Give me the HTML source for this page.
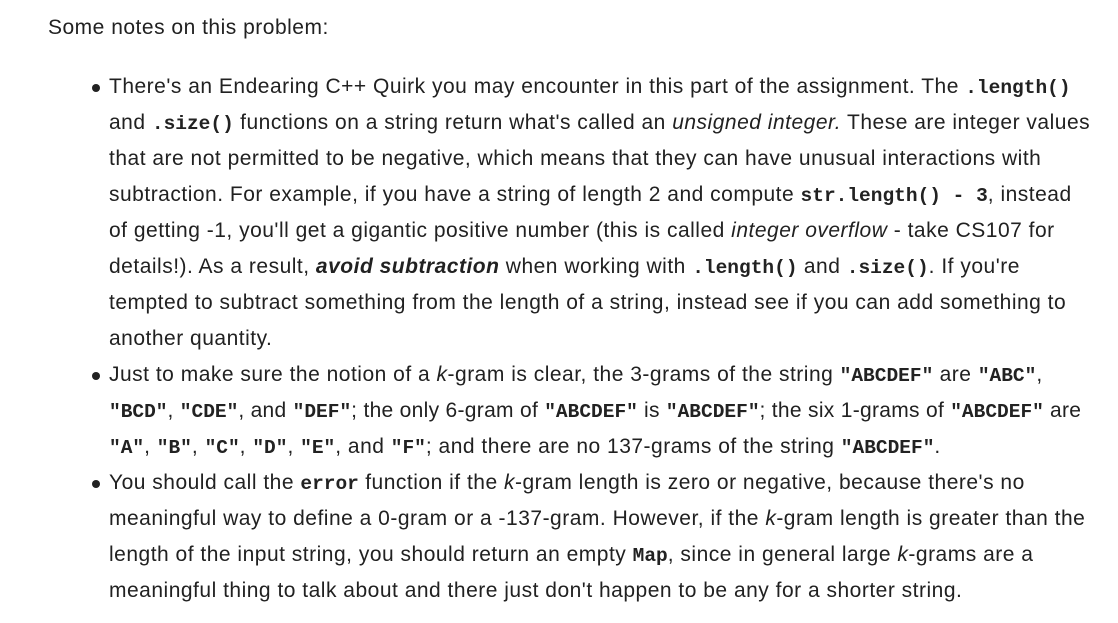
<!DOCTYPE html>
<html><head><meta charset="utf-8"><style>
body{margin:0;background:#fff;width:1118px;height:623px;overflow:hidden;font-family:"Liberation Sans",sans-serif;font-size:21px;letter-spacing:0.5px;color:#212121}
.l{position:absolute;left:109px;white-space:nowrap;height:36px;line-height:36px}
.p{left:48px}
code{font-family:"Liberation Mono",monospace;font-weight:bold;font-size:19.5px;letter-spacing:0px;color:#222}
.b::before{content:"";position:absolute;left:-17px;top:15px;width:8px;height:8px;border-radius:50%;background:#222}
.t{letter-spacing:0.3px}
</style></head><body>
<div class="l p" style="top:10px">Some notes on this problem:</div>
<div class="l b" style="top:69px">There's an Endearing C++ Quirk you may encounter in this part of the assignment. The <code>.length()</code></div>
<div class="l" style="top:105px">and <code>.size()</code> functions on a string return what's called an <i>unsigned integer.</i> These are integer values</div>
<div class="l" style="top:141px">that are not permitted to be negative, which means that they can have unusual interactions with</div>
<div class="l" style="top:177px">subtraction. For example, if you have a string of length 2 and compute <code>str.length() - 3</code>, instead</div>
<div class="l" style="top:213px">of getting -1, you'll get a gigantic positive number (this is called <i>integer overflow</i> - take CS107 for</div>
<div class="l" style="top:249px">details!). As a result, <b><i>avoid subtraction</i></b> when working with <code>.length()</code> and <code>.size()</code>. If you're</div>
<div class="l" style="top:285px">tempted to subtract something from the length of a string, instead see if you can add something to</div>
<div class="l" style="top:321px">another quantity.</div>
<div class="l b" style="top:357px">Just to make sure the notion of a <i>k</i>-gram is clear, the 3-grams of the string <code>"ABCDEF"</code> are <code>"ABC"</code>,</div>
<div class="l t" style="top:393px"><code>"BCD"</code>, <code>"CDE"</code>, and <code>"DEF"</code>; the only 6-gram of <code>"ABCDEF"</code> is <code>"ABCDEF"</code>; the six 1-grams of <code>"ABCDEF"</code> are</div>
<div class="l" style="top:429px"><code>"A"</code>, <code>"B"</code>, <code>"C"</code>, <code>"D"</code>, <code>"E"</code>, and <code>"F"</code>; and there are no 137-grams of the string <code>"ABCDEF"</code>.</div>
<div class="l b" style="top:465px">You should call the <code>error</code> function if the <i>k</i>-gram length is zero or negative, because there's no</div>
<div class="l" style="top:501px">meaningful way to define a 0-gram or a -137-gram. However, if the <i>k</i>-gram length is greater than the</div>
<div class="l" style="top:537px">length of the input string, you should return an empty <code>Map</code>, since in general large <i>k</i>-grams are a</div>
<div class="l" style="top:573px">meaningful thing to talk about and there just don't happen to be any for a shorter string.</div>
</body></html>
